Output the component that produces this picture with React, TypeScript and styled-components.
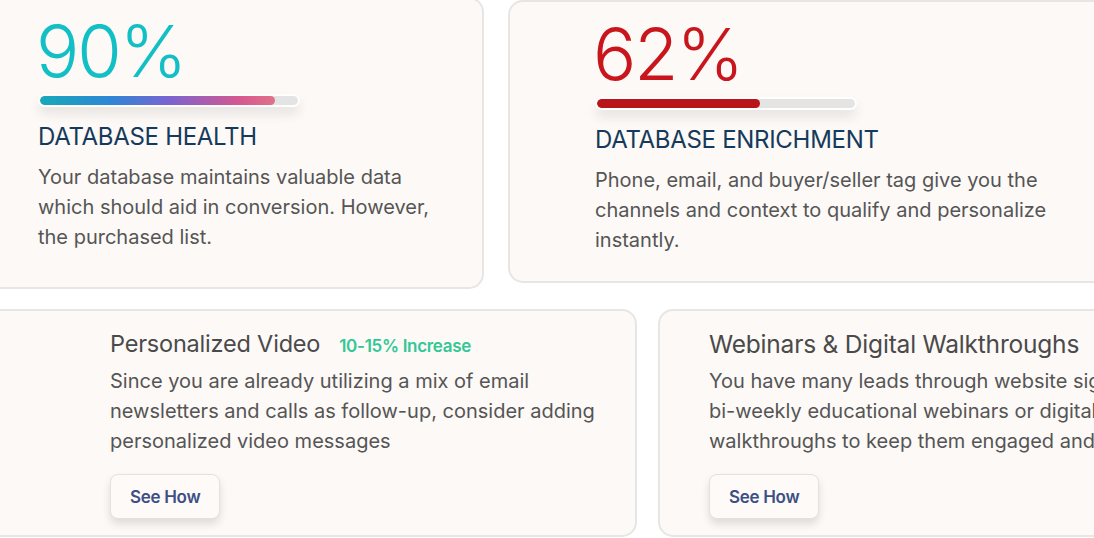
import React from 'react'
import styled, { createGlobalStyle } from 'styled-components'

const GlobalStyle = createGlobalStyle`
  html, body {
    margin: 0;
    padding: 0;
    background: #ffffff;
    overflow: hidden;
  }
  body {
    font-family: Inter, "Open Sans", sans-serif;
    -webkit-font-smoothing: antialiased;
  }
`

const Page = styled.div`
  width: 1094px;
  height: 538px;
  overflow: hidden;
  display: flex;
  flex-direction: column;
  gap: 20px;
`

const Row = styled.div<{ $offset: number; $gap: number; $top?: number }>`
  display: flex;
  align-items: flex-start;
  gap: ${p => p.$gap}px;
  margin-left: ${p => p.$offset}px;
  margin-top: ${p => p.$top ?? 0}px;
`

const Card = styled.div<{ $w: number; $h: number; $pl: number; $pt: number; $mt?: number }>`
  flex: none;
  box-sizing: border-box;
  width: ${p => p.$w}px;
  height: ${p => p.$h}px;
  margin-top: ${p => p.$mt ?? 0}px;
  padding: ${p => p.$pt}px 24px 0 ${p => p.$pl}px;
  background: #fcf9f7;
  border: 2px solid #e8e6e4;
  border-radius: 15px;
  display: flex;
  flex-direction: column;
  align-items: flex-start;
`

const Percent = styled.div<{ $color: string }>`
  font-size: 72px;
  line-height: 74px;
  font-weight: 300;
  letter-spacing: -2px;
  color: ${p => p.$color};
  margin-left: -2px;
`

const Track = styled.div`
  box-sizing: border-box;
  width: 262px;
  height: 13px;
  margin-top: 6px;
  border: 2px solid #ffffff;
  border-radius: 7px;
  background: #e4e4e4;
  box-shadow: 0 7px 12px rgba(0, 0, 0, 0.09);
  overflow: hidden;
`

const Fill = styled.div<{ $bg: string }>`
  height: 100%;
  border-radius: 5px;
  background: ${p => p.$bg};
`

const StatTitle = styled.div`
  margin-top: 15px;
  font-size: 24px;
  line-height: 30px;
  font-weight: 400;
  letter-spacing: -0.3px;
  color: #163a5b;
`

const Body = styled.p<{ $w: number }>`
  margin: 10px 0 0;
  width: ${p => p.$w}px;
  font-size: 20px;
  line-height: 30px;
  font-weight: 400;
  letter-spacing: 0;
  color: #555555;
`

const Head = styled.div`
  display: flex;
  align-items: baseline;
  gap: 19px;
`

const IdeaTitle = styled.div<{ $size: number }>`
  font-size: ${p => p.$size}px;
  line-height: 32px;
  font-weight: 400;
  letter-spacing: -0.2px;
  color: #4a4a4a;
  white-space: nowrap;
`

const Badge = styled.span`
  font-size: 17px;
  font-weight: 600;
  letter-spacing: -0.3px;
  color: #33c795;
`

const IdeaBody = styled(Body)`
  margin-top: 6px;
  white-space: nowrap;
`

const Button = styled.button`
  margin-top: 18px;
  box-sizing: border-box;
  height: 45px;
  padding: 0 19px;
  background: #fdfaf8;
  border: 1px solid #e4e1de;
  border-radius: 8px;
  box-shadow: 0 5px 8px rgba(0, 0, 0, 0.12);
  font-family: Inter, sans-serif;
  font-size: 17px;
  font-weight: 600;
  letter-spacing: -0.3px;
  color: #3d5085;
`

const stats = [
  {
    value: 90,
    color: '#12bfc4',
    fill: 'linear-gradient(90deg, #17a9b8 0%, #2e86d6 30%, #7a64d0 55%, #d6588f 85%, #e0728a 100%)',
    title: 'DATABASE HEALTH',
    body: 'Your database maintains valuable data which should aid in conversion. However, the purchased list.',
    w: 533, h: 292, pt: 15, mt: 0, bodyW: 410,
  },
  {
    value: 62,
    color: '#c8161c',
    fill: '#b91419',
    title: 'DATABASE ENRICHMENT',
    body: 'Phone, email, and buyer/seller tag give you the channels and context to qualify and personalize instantly.',
    w: 640, h: 283, pt: 15, mt: 3, bodyW: 470,
  },
]

export default function App() {
  return (
    <>
      <GlobalStyle />
      <Page>
        <Row $offset={-49} $gap={24} $top={-3}>
          {stats.map(s => (
            <Card key={s.title} $w={s.w} $h={s.h} $pl={85} $pt={s.pt} $mt={s.mt}>
              <Percent $color={s.color}>{s.value}%</Percent>
              <Track>
                <Fill $bg={s.fill} style={{ width: `${s.value + 1}%` }} />
              </Track>
              <StatTitle>{s.title}</StatTitle>
              <Body $w={s.bodyW}>{s.body}</Body>
            </Card>
          ))}
        </Row>
        <Row $offset={-60} $gap={21}>
          <Card $w={697} $h={228} $pl={168} $pt={17}>
            <Head>
              <IdeaTitle $size={23.5}>Personalized Video</IdeaTitle>
              <Badge>10-15% Increase</Badge>
            </Head>
            <IdeaBody $w={500}>
              Since you are already utilizing a mix of email
              <br />
              newsletters and calls as follow-up, consider adding
              <br />
              personalized video messages
            </IdeaBody>
            <Button>See How</Button>
          </Card>
          <Card $w={520} $h={228} $pl={49} $pt={17}>
            <IdeaTitle $size={24.5}>Webinars &amp; Digital Walkthroughs</IdeaTitle>
            <IdeaBody $w={500}>
              You have many leads through website sign-ups, host
              <br />
              bi-weekly educational webinars or digital product
              <br />
              walkthroughs to keep them engaged and informed
            </IdeaBody>
            <Button>See How</Button>
          </Card>
        </Row>
      </Page>
    </>
  )
}
